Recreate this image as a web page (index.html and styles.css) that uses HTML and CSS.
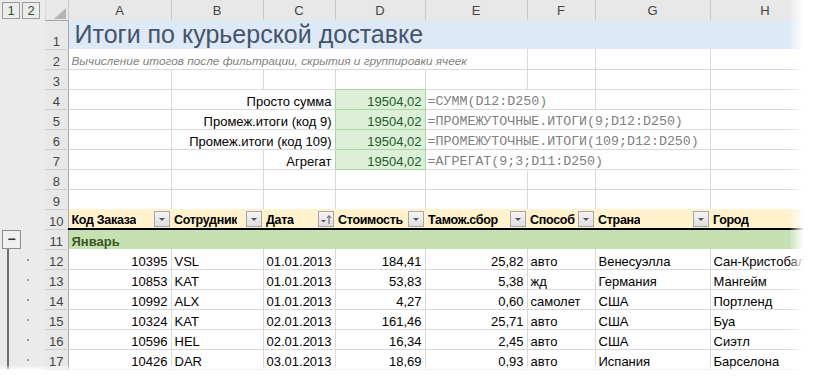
FILE: index.html
```html
<!DOCTYPE html>
<html lang="ru">
<head>
  <meta charset="UTF-8">
  <title>Итоги по курьерской доставке</title>
  <link rel="stylesheet" href="styles.css">
</head>
<body>
  <div class="sheet">
    <table class="grid">
      <colgroup>
        <col class="w-ol"><col class="w-rh">
        <col class="w-a"><col class="w-b"><col class="w-c"><col class="w-d">
        <col class="w-e"><col class="w-f"><col class="w-g"><col class="w-h">
      </colgroup>
      <thead>
        <tr class="colhead">
          <th class="ol">
            <div class="levels"><span class="lvl">1</span><span class="lvl">2</span></div>
          </th>
          <th class="corner">
            <svg width="12" height="11" viewBox="0 0 12 11"><polygon points="12,0 12,11 0,11" fill="#b4b4b4"/></svg>
          </th>
          <th>A</th><th>B</th><th>C</th><th>D</th><th>E</th><th>F</th><th>G</th><th>H</th>
        </tr>
      </thead>
      <tbody>
        <tr class="r-title">
          <td class="ol"></td><th class="rh">1</th>
          <td colspan="8" class="title">Итоги по курьерской доставке</td>
        </tr>
        <tr>
          <td class="ol"></td><th class="rh">2</th>
          <td colspan="5" class="subtitle">Вычисление итогов после фильтрации, скрытия и группировки ячеек</td>
          <td></td><td></td><td></td>
        </tr>
        <tr>
          <td class="ol"></td><th class="rh">3</th>
          <td></td><td></td><td></td><td class="above-good"></td><td></td><td></td><td></td><td></td>
        </tr>
        <tr>
          <td class="ol"></td><th class="rh">4</th>
          <td></td><td colspan="2" class="label next-good">Просто сумма</td>
          <td class="good">19504,02</td>
          <td colspan="2" class="formula">=СУММ(D12:D250)</td><td></td><td></td>
        </tr>
        <tr>
          <td class="ol"></td><th class="rh">5</th>
          <td></td><td colspan="2" class="label next-good">Промеж.итоги (код 9)</td>
          <td class="good">19504,02</td>
          <td colspan="3" class="formula">=ПРОМЕЖУТОЧНЫЕ.ИТОГИ(9;D12:D250)</td><td></td>
        </tr>
        <tr>
          <td class="ol"></td><th class="rh">6</th>
          <td></td><td colspan="2" class="label next-good">Промеж.итоги (код 109)</td>
          <td class="good">19504,02</td>
          <td colspan="3" class="formula">=ПРОМЕЖУТОЧНЫЕ.ИТОГИ(109;D12:D250)</td><td></td>
        </tr>
        <tr>
          <td class="ol"></td><th class="rh">7</th>
          <td></td><td></td><td class="label next-good">Агрегат</td>
          <td class="good">19504,02</td>
          <td colspan="3" class="formula">=АГРЕГАТ(9;3;D11:D250)</td><td></td>
        </tr>
        <tr>
          <td class="ol"></td><th class="rh">8</th>
          <td></td><td></td><td></td><td></td><td></td><td></td><td></td><td></td>
        </tr>
        <tr>
          <td class="ol"></td><th class="rh">9</th>
          <td></td><td></td><td></td><td></td><td></td><td></td><td></td><td></td>
        </tr>
        <tr class="r-head">
          <td class="ol"></td><th class="rh">10</th>
          <td><div class="hcell"><span>Код Заказа</span><span class="fbtn"><svg width="14" height="14" viewBox="0 0 14 14"><polygon points="4,6 10,6 7,9" fill="#595959"/></svg></span></div></td>
          <td><div class="hcell"><span>Сотрудник</span><span class="fbtn"><svg width="14" height="14" viewBox="0 0 14 14"><polygon points="4,6 10,6 7,9" fill="#595959"/></svg></span></div></td>
          <td><div class="hcell"><span>Дата</span><span class="fbtn"><svg width="14" height="14" viewBox="0 0 14 14"><polygon points="2,8 7,8 4.5,10.5" fill="#595959"/><path d="M10 12V4M8 6l2-2.5 2 2.5" stroke="#595959" stroke-width="1" fill="none"/></svg></span></div></td>
          <td><div class="hcell"><span>Стоимость</span><span class="fbtn"><svg width="14" height="14" viewBox="0 0 14 14"><polygon points="4,6 10,6 7,9" fill="#595959"/></svg></span></div></td>
          <td><div class="hcell"><span>Тамож.сбор</span><span class="fbtn"><svg width="14" height="14" viewBox="0 0 14 14"><polygon points="4,6 10,6 7,9" fill="#595959"/></svg></span></div></td>
          <td><div class="hcell"><span>Способ</span><span class="fbtn"><svg width="14" height="14" viewBox="0 0 14 14"><polygon points="4,6 10,6 7,9" fill="#595959"/></svg></span></div></td>
          <td><div class="hcell"><span>Страна</span><span class="fbtn"><svg width="14" height="14" viewBox="0 0 14 14"><polygon points="4,6 10,6 7,9" fill="#595959"/></svg></span></div></td>
          <td><div class="hcell"><span>Город</span></div></td>
        </tr>
        <tr class="r-group">
          <td class="ol"><span class="collapse">&minus;</span></td><th class="rh">11</th>
          <td colspan="8" class="group">Январь</td>
        </tr>
        <tr>
          <td class="ol ol-item"></td><th class="rh">12</th>
          <td class="num">10395</td><td>VSL</td><td>01.01.2013</td><td class="num">184,41</td><td class="num">25,82</td><td>авто</td><td>Венесуэлла</td><td>Сан-Кристобаль</td>
        </tr>
        <tr>
          <td class="ol ol-item"></td><th class="rh">13</th>
          <td class="num">10853</td><td>KAT</td><td>01.01.2013</td><td class="num">53,83</td><td class="num">5,38</td><td>жд</td><td>Германия</td><td>Мангейм</td>
        </tr>
        <tr>
          <td class="ol ol-item"></td><th class="rh">14</th>
          <td class="num">10992</td><td>ALX</td><td>01.01.2013</td><td class="num">4,27</td><td class="num">0,60</td><td>самолет</td><td>США</td><td>Портленд</td>
        </tr>
        <tr>
          <td class="ol ol-item"></td><th class="rh">15</th>
          <td class="num">10324</td><td>KAT</td><td>02.01.2013</td><td class="num">161,46</td><td class="num">25,71</td><td>авто</td><td>США</td><td>Буа</td>
        </tr>
        <tr>
          <td class="ol ol-item"></td><th class="rh">16</th>
          <td class="num">10596</td><td>HEL</td><td>02.01.2013</td><td class="num">16,34</td><td class="num">2,45</td><td>авто</td><td>США</td><td>Сиэтл</td>
        </tr>
        <tr>
          <td class="ol ol-item"></td><th class="rh">17</th>
          <td class="num">10426</td><td>DAR</td><td>03.01.2013</td><td class="num">18,69</td><td class="num">0,93</td><td>авто</td><td>Испания</td><td>Барселона</td>
        </tr>
      </tbody>
    </table>

    <!-- torn-off edges of the screenshot -->
    <div class="fade-right"></div>
    <div class="fade-bottom"></div>
  </div>
</body>
</html>
```

FILE: styles.css
```css
* {
  box-sizing: border-box;
}

body {
  margin: 0;
  background: #fff;
  font-family: "Liberation Sans", Arial, sans-serif;
  font-size: 13px;
  color: #000;
}

.sheet {
  position: relative;
  width: 820px;
  height: 380px;
  overflow: hidden;
}

/* Grid */
.grid {
  border-collapse: collapse;
  table-layout: fixed;
  width: 820px;
}

.w-ol { width: 45px; }
.w-rh { width: 23px; }
.w-a { width: 103px; }
.w-b { width: 92px; }
.w-c { width: 72px; }
.w-d { width: 90px; }
.w-e { width: 102px; }
.w-f { width: 68px; }
.w-g { width: 115px; }
.w-h { width: 110px; }

.grid tr {
  height: 20px;
}

.grid td,
.grid th {
  padding: 0 3px;
  border: 1px solid #d9d9d9;
  white-space: nowrap;
  overflow: hidden;
  vertical-align: bottom;
  font-weight: normal;
  text-align: left;
  line-height: 15px;
}

/* Column headers */
.colhead {
  height: 19px;
}

.colhead th {
  background: #e8e8e8;
  color: #444;
  text-align: center;
  vertical-align: middle;
  border-top: none;
  border-right-color: #c9c9c9;
  border-bottom-color: #a6a6a6;
}

.colhead .corner {
  text-align: right;
  padding: 0 2px 1px 0;
  vertical-align: bottom;
  line-height: 0;
}

/* Row headers */
.grid .rh {
  background: #e8e8e8;
  color: #444;
  text-align: center;
  padding: 0;
  border-left: none;
  border-right-color: #a6a6a6;
  border-bottom-color: #cfcfcf;
}

/* Outline gutter */
.grid .ol,
.colhead .ol {
  background: #ebebeb;
  border: none;
  padding: 0;
  vertical-align: middle;
}

.levels {
  display: flex;
  gap: 2px;
  padding-left: 2px;
}

.lvl {
  width: 18px;
  height: 17px;
  border: 1px solid #9a9a9a;
  background: #ececec;
  color: #2f4f2f;
  font-size: 13px;
  line-height: 15px;
  text-align: center;
}

.collapse {
  display: block;
  width: 19px;
  height: 19px;
  margin-left: 2px;
  border: 1px solid #8c8c8c;
  background: #efefef;
  color: #333;
  font-weight: bold;
  font-size: 14px;
  line-height: 16px;
  text-align: center;
}

.grid .ol-item {
  background:
    linear-gradient(#707070, #707070) 7px 0 / 2px 100% no-repeat,
    linear-gradient(#9a9a9a, #9a9a9a) 27px 10px / 2px 2px no-repeat,
    #ebebeb;
}

/* Title rows */
.r-title {
  height: 39px;
}

.grid .title {
  background: #dde9f6;
  color: #44546a;
  font-size: 25px;
  line-height: 28px;
  padding: 0 6px 1px;
  border-top-style: hidden;
  border-right-style: hidden;
  border-bottom-style: hidden;
}

.grid .subtitle {
  font-style: italic;
  font-size: 11.8px;
  color: #7f7f7f;
}

/* Totals block */
.grid .label {
  text-align: right;
}

.grid .good {
  background: #dbf0d6;
  color: #1f5b2c;
  text-align: right;
  border-color: #a9d5a0;
}

.grid .next-good {
  border-right-color: #a9d5a0;
}

.grid .above-good {
  border-bottom-color: #a9d5a0;
}

.grid .formula {
  font-family: "Liberation Mono", "DejaVu Sans Mono", monospace;
  font-size: 13.3px;
  color: #808080;
  padding-left: 2px;
}

/* Table header row */
.r-head td {
  background: #fff2cc;
  font-weight: bold;
  font-size: 12.5px;
  letter-spacing: -0.3px;
  padding: 0 1px 0 3px;
  border-top-style: hidden;
  border-left-style: hidden;
  border-right-style: hidden;
  border-bottom: 2px solid #000;
}

.r-head td:nth-child(3) {
  border-left-style: solid;
  border-left-color: #a6a6a6;
}

.hcell {
  display: flex;
  justify-content: space-between;
  align-items: flex-end;
  gap: 1px;
}

.hcell span:first-child {
  overflow: hidden;
}

.fbtn {
  flex: none;
  width: 16px;
  height: 16px;
  margin-bottom: 1px;
  border: 1px solid #a6a6a6;
  background: linear-gradient(#f4f4f4, #dedede);
  line-height: 0;
}

/* Group row */
.grid .group {
  background: #c6e0b4;
  color: #375623;
  font-weight: bold;
  border-right-style: hidden;
  border-bottom-style: hidden;
}

.grid .num {
  text-align: right;
}

/* Faded edges */
.fade-right {
  position: absolute;
  top: 0;
  right: 0;
  width: 30px;
  height: 100%;
  background: linear-gradient(to right, rgba(255, 255, 255, 0.1), #fff 14px);
}

.fade-bottom {
  position: absolute;
  left: 0;
  bottom: 0;
  width: 100%;
  height: 14px;
  background: linear-gradient(rgba(255, 255, 255, 0.3), #fff 8px);
}
```
